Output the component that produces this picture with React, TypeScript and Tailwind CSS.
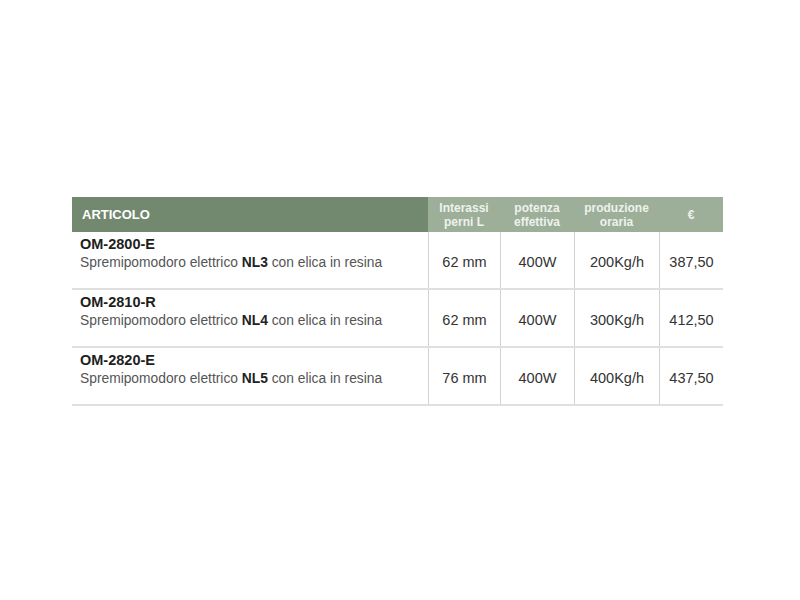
const rows = [
  { code: 'OM-2800-E', nl: 'NL3', perni: '62 mm', potenza: '400W', prod: '200Kg/h', prezzo: '387,50' },
  { code: 'OM-2810-R', nl: 'NL4', perni: '62 mm', potenza: '400W', prod: '300Kg/h', prezzo: '412,50' },
  { code: 'OM-2820-E', nl: 'NL5', perni: '76 mm', potenza: '400W', prod: '400Kg/h', prezzo: '437,50' },
]

const cols = 'grid grid-cols-[356px_72px_74px_85px_64px]'

export default function App() {
  return (
    <div className="w-[800px] h-[600px] bg-white pt-[197px] pl-[72px] font-['Liberation_Sans',Arial,sans-serif]">
      <div className="w-[651px]">
        {/* Header */}
        <div className={`${cols} h-[35px]`}>
          <div className="bg-[#72896f] flex items-center pl-[10px] text-white font-bold text-[13px]">
            ARTICOLO
          </div>
          <div className="bg-[#9dae99] flex items-center justify-center text-center text-[#eef2ed] font-bold text-[12px] leading-[14px]">
            Interassi<br />perni L
          </div>
          <div className="bg-[#9dae99] flex items-center justify-center text-center text-[#eef2ed] font-bold text-[12px] leading-[14px]">
            potenza<br />effettiva
          </div>
          <div className="bg-[#9dae99] flex items-center justify-center text-center text-[#eef2ed] font-bold text-[12px] leading-[14px]">
            produzione<br />oraria
          </div>
          <div className="bg-[#9dae99] flex items-center justify-center text-[#eef2ed] font-bold text-[12px]">
            €
          </div>
        </div>

        {/* Rows */}
        {rows.map((r) => (
          <div key={r.code} className={`${cols} h-[58px] border-b-2 border-[#e0e0e0]`}>
            <div className="pl-[8px] pt-[4px]">
              <div className="text-[14.5px] font-bold text-[#1e1e1e] leading-[17px]">{r.code}</div>
              <div className="text-[13.8px] text-[#555] leading-[19px]">
                Spremipomodoro elettrico <span className="font-bold text-[#222]">{r.nl}</span> con elica in resina
              </div>
            </div>
            <div className="border-l border-[#d2d2d2] flex items-center justify-center pt-[5px] text-[14.5px] text-[#333]">
              {r.perni}
            </div>
            <div className="border-l border-[#d2d2d2] flex items-center justify-center pt-[5px] text-[14.5px] text-[#333]">
              {r.potenza}
            </div>
            <div className="border-l border-[#d2d2d2] flex items-center justify-center pt-[5px] text-[14.5px] text-[#333]">
              {r.prod}
            </div>
            <div className="border-l border-[#d2d2d2] flex items-center justify-center pt-[5px] text-[14.5px] text-[#333]">
              {r.prezzo}
            </div>
          </div>
        ))}
      </div>
    </div>
  )
}
